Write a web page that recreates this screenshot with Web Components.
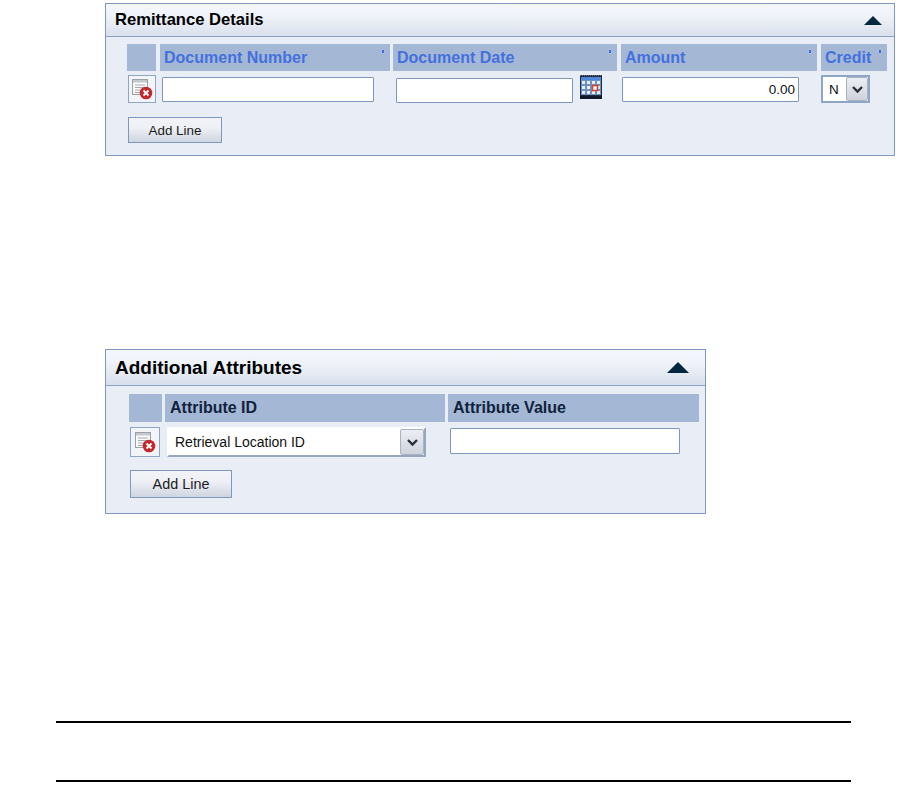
<!DOCTYPE html>
<html>
<head>
<meta charset="utf-8">
<title>Remittance Details</title>
<style>
  html, body { margin: 0; background: #fff; }
  body { font-family: "Liberation Sans", Arial, sans-serif; }
</style>
</head>
<body>
<doc-page>
  <form-panel title="Remittance Details" style="width:790px;height:153px;margin:3px 0 0 105px;--head:33px;--title:16.6px;--pad:7px 0 0 21px;--arrow:19px;--arrow-right:12px">
    <grid-row cols="33px 233px 228px 200px 66px" style="height:27px">
      <col-head blank style="margin-right:4px"></col-head>
      <col-head link sort style="margin-right:3px">Document Number</col-head>
      <col-head link sort style="margin-right:4px">Document Date</col-head>
      <col-head link sort style="margin-right:4px">Amount</col-head>
      <col-head link sort>Credit</col-head>
    </grid-row>
    <grid-row cols="34px 233px 227px 199px 66px" style="height:30px;margin:4px 0 0 1px">
      <delete-button></delete-button>
      <text-field style="width:212px;height:25px;margin-top:2px"></text-field>
      <div style="display:flex;gap:7px;margin-left:1px">
        <text-field style="width:177px;height:25px;margin-top:3px"></text-field>
        <calendar-icon></calendar-icon>
      </div>
      <text-field align="right" style="width:177px;height:25px;margin-top:2px">0.00</text-field>
      <drop-down style="width:49px;height:28px">N</drop-down>
    </grid-row>
    <add-line style="width:94px;height:26px;margin:12px 0 0 1px">Add Line</add-line>
  </form-panel>

  <form-panel title="Additional Attributes" style="width:601px;height:165px;margin:193px 0 0 105px;--head:36px;--title:19px;--pad:8px 0 0 23px;--arrow:22px;--arrow-right:16px">
    <grid-row cols="36px 283px 251px" style="height:28px">
      <col-head blank style="margin-right:3px"></col-head>
      <col-head style="margin-right:3px">Attribute ID</col-head>
      <col-head>Attribute Value</col-head>
    </grid-row>
    <grid-row cols="37px 282px 250px" style="height:30px;margin:5px 0 0 1px">
      <delete-button style="width:30px;height:30px"></delete-button>
      <drop-down wide style="width:259px;height:30px">Retrieval Location ID</drop-down>
      <text-field style="width:230px;height:26px;margin:1px 0 0 1px"></text-field>
    </grid-row>
    <add-line style="width:102px;height:28px;margin:13px 0 0 1px;--size:14.4px">Add Line</add-line>
  </form-panel>

  <page-rule style="margin-top:207px"></page-rule>
  <page-rule style="margin-top:57px"></page-rule>
</doc-page>

<script>
class DocPage extends HTMLElement {
    constructor() {
        super();
        this.attachShadow({ mode: 'open' });
        this.shadowRoot.innerHTML = `
          <style>
            :host { display: flow-root; width: 907px; height: 788px; overflow: hidden; }
          </style>
          <slot></slot>`;
    }
}

class FormPanel extends HTMLElement {
    constructor() {
        super();
        this.attachShadow({ mode: 'open' });
        this.shadowRoot.innerHTML = `
          <style>
            :host {
              display: block;
              box-sizing: border-box;
              border: 1px solid #7f97bd;
              background: #e8edf6;
              color: #000;
            }
            .bar {
              box-sizing: border-box;
              height: var(--head);
              display: flex;
              align-items: center;
              justify-content: space-between;
              padding: 0 var(--arrow-right) 0 9px;
              border-bottom: 1px solid #8ba2c6;
              background: linear-gradient(#f3f6fb, #f0f3f9 35%, #d9e0ec);
            }
            h2 { margin: 0; font-size: var(--title); font-weight: bold; line-height: 1; }
            .arrow {
              width: 0; height: 0;
              border-left: calc(var(--arrow) / 2) solid transparent;
              border-right: calc(var(--arrow) / 2) solid transparent;
              border-bottom: calc(var(--arrow) / 2) solid #02283f;
            }
            .body { padding: var(--pad); }
          </style>
          <div class="bar"><h2></h2><span class="arrow"></span></div>
          <div class="body"><slot></slot></div>`;
    }

    connectedCallback() {
        this.shadowRoot.querySelector('h2').textContent = this.getAttribute('title');
    }
}

class GridRow extends HTMLElement {
    constructor() {
        super();
        this.attachShadow({ mode: 'open' });
        this.shadowRoot.innerHTML = `
          <style>
            :host { display: grid; justify-content: start; }
          </style>
          <slot></slot>`;
    }

    connectedCallback() {
        this.style.gridTemplateColumns = this.getAttribute('cols');
    }
}

class ColHead extends HTMLElement {
    constructor() {
        super();
        this.attachShadow({ mode: 'open' });
        this.shadowRoot.innerHTML = `
          <style>
            :host {
              display: flex;
              align-items: center;
              position: relative;
              background: #a4b8d6;
              padding-left: 5px;
              font-size: 16px;
              font-weight: bold;
              color: #11223c;
              white-space: nowrap;
              overflow: hidden;
            }
            :host([link]) { color: #4470dd; padding-left: 4px; }
            .sort {
              display: none;
              position: absolute;
              top: 6px; right: 6px;
              width: 2px; height: 3px;
              background: #3a6de0;
              box-shadow: 0 0 1px #fff;
            }
            :host([sort]) .sort { display: block; }
          </style>
          <slot></slot><span class="sort"></span>`;
    }
}

class TextField extends HTMLElement {
    constructor() {
        super();
        this.attachShadow({ mode: 'open' });
        this.shadowRoot.innerHTML = `
          <style>
            :host {
              display: flex;
              align-items: center;
              box-sizing: border-box;
              border: 1px solid #7f97bd;
              border-radius: 1px;
              background: #fff;
              padding: 0 3px;
              font-size: 13.5px;
              color: #111;
            }
            :host([align=right]) { justify-content: flex-end; }
          </style>
          <slot></slot>`;
    }
}

class DropDown extends HTMLElement {
    constructor() {
        super();
        this.attachShadow({ mode: 'open' });
        this.shadowRoot.innerHTML = `
          <style>
            :host {
              display: flex;
              box-sizing: border-box;
              border: 2px solid #8fa5c6;
              background: #fff;
              font-size: 13.5px;
              color: #111;
            }
            .val { flex: 1; display: flex; align-items: center; padding-left: 6px; }
            :host([wide]) { border-color: #fff #96a6bd #96a6bd #fff; font-size: 14px; }
            :host([wide]) .val { padding-left: 6px; }
            .btn {
              width: 22px;
              display: flex;
              align-items: center;
              justify-content: center;
              box-sizing: border-box;
              border: 1px solid #aab3c2;
              border-radius: 2px;
              background: linear-gradient(#eceef3, #cfd3de);
            }
            :host([wide]) .btn { width: 24px; }
          </style>
          <span class="val"><slot></slot></span>
          <span class="btn">
            <svg width="13" height="9" viewBox="0 0 13 9"><path d="M2 2l4.5 4.5L11 2" fill="none" stroke="#2b3038" stroke-width="2.4"/></svg>
          </span>`;
    }
}

class DeleteButton extends HTMLElement {
    constructor() {
        super();
        this.attachShadow({ mode: 'open' });
        this.shadowRoot.innerHTML = `
          <style>
            :host {
              display: flex;
              align-items: center;
              justify-content: center;
              box-sizing: border-box;
              width: 28px;
              height: 28px;
              border: 1px solid #8fa5c6;
              background: #f2f4f8;
            }
          </style>
          <svg width="22" height="22" viewBox="0 0 22 22">
            <rect x="1.5" y="1.5" width="15" height="15" fill="#fbfbfb" stroke="#9aa0a6"/>
            <rect x="2" y="2" width="14" height="2.5" fill="#c3c8ce"/>
            <path d="M4 7h10M4 9.500h10M4 12h8M4 14.500h6" stroke="#a4a9af" stroke-width="1"/>
            <circle cx="15" cy="15" r="6.300" fill="#c4272c"/>
            <path d="M12.500 12.500l5 5M17.500 12.500l-5 5" stroke="#fff" stroke-width="1.900"/>
          </svg>`;
    }
}

class CalendarIcon extends HTMLElement {
    constructor() {
        super();
        this.attachShadow({ mode: 'open' });
        this.shadowRoot.innerHTML = `
          <style>
            :host { display: block; width: 22px; height: 24px; }
          </style>
          <svg width="22" height="24" viewBox="0 0 22 24">
            <rect x="0" y="0" width="22" height="24" fill="#1e2b45"/>
            <path d="M0 .5h22" stroke="#777" stroke-dasharray="1 1"/>
            <rect x="1" y="2" width="20" height="3" fill="#4f86d8"/>
            <rect x="1" y="5" width="20" height="15" fill="#6f92c4"/>
            <path d="M2 6h3v3H2zM7 6h3v3H7zM12 6h3v3h-3zM17 6h3v3h-3zM2 11h3v3H2zM7 11h3v3H7zM17 11h3v3h-3zM2 16h3v3H2zM7 16h3v3H7zM12 16h3v3h-3zM17 16h3v3h-3z" fill="#e6edf7"/>
            <rect x="12.500" y="10.500" width="5" height="5" fill="#fff" stroke="#d8432c" stroke-width="1.600"/>
            <rect x="0" y="21" width="22" height="3" fill="#111a2c"/>
          </svg>`;
    }
}

class AddLine extends HTMLElement {
    constructor() {
        super();
        this.attachShadow({ mode: 'open' });
        this.shadowRoot.innerHTML = `
          <style>
            :host {
              display: flex;
              align-items: center;
              justify-content: center;
              box-sizing: border-box;
              border: 1px solid #8098bd;
              background: linear-gradient(#f1f3f7, #eef0f5 40%, #cfd5e0);
              font-size: var(--size, 13.4px);
              color: #1b1b1b;
            }
          </style>
          <slot></slot>`;
    }
}

class PageRule extends HTMLElement {
    constructor() {
        super();
        this.attachShadow({ mode: 'open' });
        this.shadowRoot.innerHTML = `
          <style>
            :host { display: block; width: 795px; height: 2px; margin-left: 56px; background: #000; }
          </style>`;
    }
}

customElements.define('doc-page', DocPage);
customElements.define('form-panel', FormPanel);
customElements.define('grid-row', GridRow);
customElements.define('col-head', ColHead);
customElements.define('text-field', TextField);
customElements.define('drop-down', DropDown);
customElements.define('delete-button', DeleteButton);
customElements.define('calendar-icon', CalendarIcon);
customElements.define('add-line', AddLine);
customElements.define('page-rule', PageRule);
</script>
</body>
</html>
